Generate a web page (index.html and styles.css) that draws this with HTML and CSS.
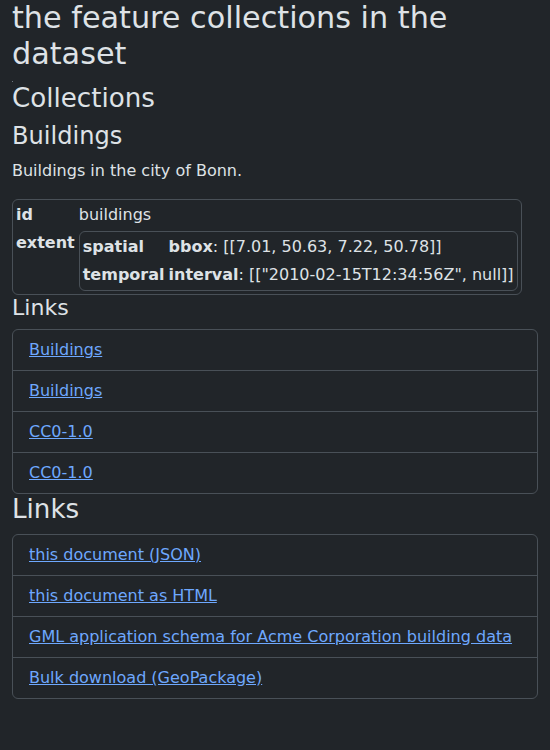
FILE: index.html
```html
<!DOCTYPE html>
<html lang="en">
<head>
<meta charset="utf-8">
<title>Collections</title>
<link rel="stylesheet" href="styles.css">
</head>
<body>
<div class="container">
  <h1 class="h1">the feature collections in the dataset</h1>
  <div class="dot"></div>
  <h2 class="h2">Collections</h2>
  <h3 class="h3">Buildings</h3>
  <p class="desc">Buildings in the city of Bonn.</p>
  <table class="kv">
    <tr><th>id</th><td>buildings</td></tr>
    <tr><th>extent</th><td>
      <table class="kv">
        <tr><th>spatial</th><td><b>bbox</b>: [[7.01, 50.63, 7.22, 50.78]]</td></tr>
        <tr><th>temporal</th><td><b>interval</b>: [["2010-02-15T12:34:56Z", null]]</td></tr>
      </table>
    </td></tr>
  </table>
  <h4 class="h4">Links</h4>
  <ul class="list">
    <li class="item"><a href="#">Buildings</a></li>
    <li class="item"><a href="#">Buildings</a></li>
    <li class="item"><a href="#">CC0-1.0</a></li>
    <li class="item"><a href="#">CC0-1.0</a></li>
  </ul>
  <h2 class="h2">Links</h2>
  <ul class="list">
    <li class="item"><a href="#">this document (JSON)</a></li>
    <li class="item"><a href="#">this document as HTML</a></li>
    <li class="item"><a href="#">GML application schema for Acme Corporation building data</a></li>
    <li class="item"><a href="#">Bulk download (GeoPackage)</a></li>
  </ul>
</div>
</body>
</html>
```
FILE: styles.css
```css
html, body {
  margin: 0;
  padding: 0;
  background: #212529;
}
body {
  color: #dee2e6;
  font-family: "DejaVu Sans", sans-serif;
  font-size: 16px;
  line-height: 24px;
}
.container {
  padding: 0 12px;
}
.h1, .h2, .h3, .h4 {
  margin: 0 0 8px 0;
  font-weight: 400;
  line-height: 1.2;
  color: #dee2e6;
}
.h1 { font-size: 30.25px; }
.h2 { font-size: 26.15px; }
.h3 { font-size: 24.1px; }
.h4 { font-size: 22.05px; }
.dot {
  width: 1px;
  height: 1px;
  background: #6c757d;
  margin-bottom: 1px;
}
.desc {
  margin: 0 0 16px 0;
}
.kv {
  border: 1px solid #495057;
  border-radius: 6px;
  border-spacing: 2px;
  border-collapse: separate;
}
.kv th, .kv td {
  padding: 1px;
  text-align: left;
  vertical-align: top;
  white-space: nowrap;
}
.kv th {
  font-weight: 700;
}
.kv b {
  font-weight: 700;
}
.list {
  list-style: none;
  margin: 0;
  padding: 0;
  border: 1px solid #495057;
  border-radius: 6px;
}
.item {
  padding: 8px 16px;
  border-top: 1px solid #495057;
}
.item:first-child {
  border-top: none;
}
.item a {
  color: #6ea8fe;
  text-decoration: underline;
}
```
